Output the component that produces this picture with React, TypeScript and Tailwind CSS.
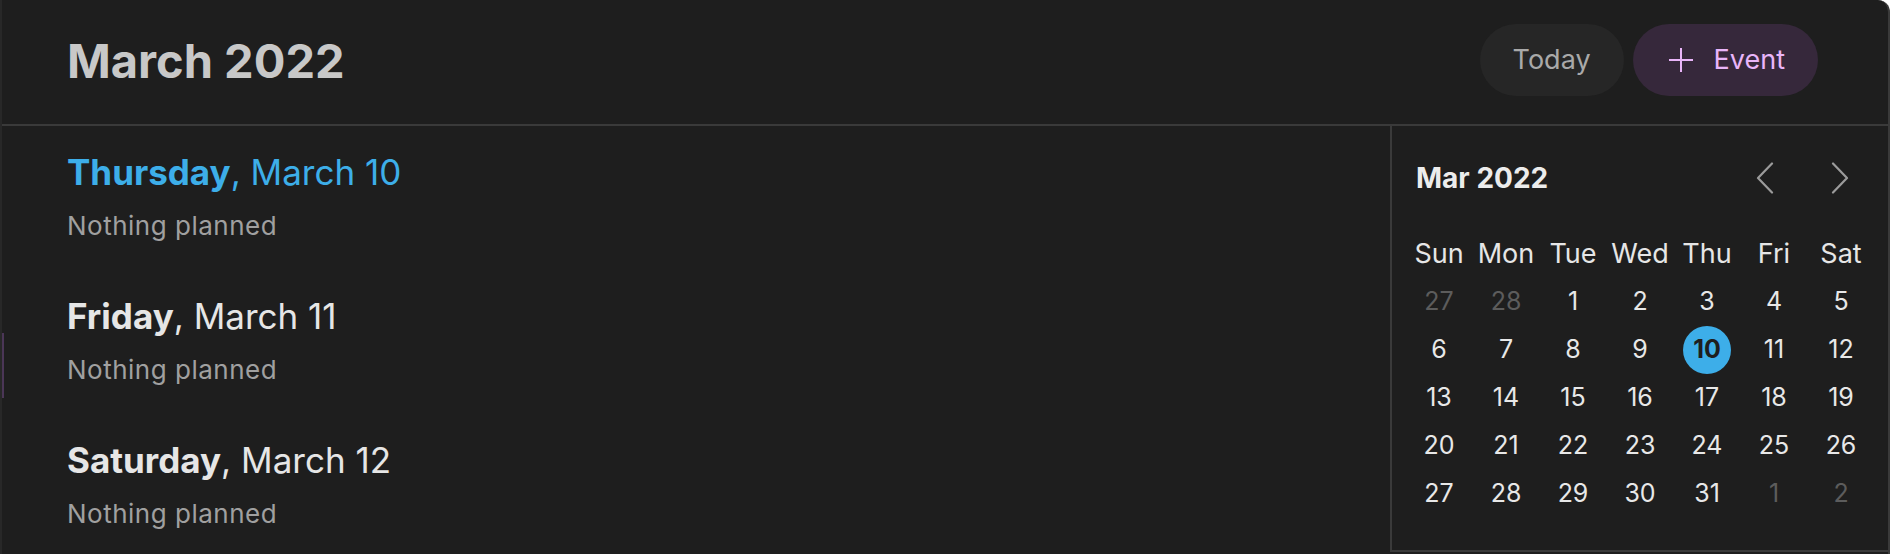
import React from "react";

const days = [
  { name: "Thursday", date: "March 10", today: true },
  { name: "Friday", date: "March 11", today: false },
  { name: "Saturday", date: "March 12", today: false },
];

const weekdays = ["Sun", "Mon", "Tue", "Wed", "Thu", "Fri", "Sat"];

// 5 weeks of March 2022, with the spill-over days from Feb / Apr
const cells: { n: number; muted?: boolean; today?: boolean }[] = [
  { n: 27, muted: true },
  { n: 28, muted: true },
  ...Array.from({ length: 31 }, (_, i) => ({ n: i + 1, today: i + 1 === 10 })),
  { n: 1, muted: true },
  { n: 2, muted: true },
];

function Chevron({ dir }: { dir: "left" | "right" }) {
  return (
    <svg width="18" height="32" viewBox="0 0 18 32" fill="none" stroke="#9b9b9b" strokeWidth="2.2" strokeLinecap="round" strokeLinejoin="round">
      {dir === "left" ? <polyline points="16,1.5 2,16 16,30.5" /> : <polyline points="2,1.5 16,16 2,30.5" />}
    </svg>
  );
}

export default function App() {
  return (
    <div
      className="relative w-[1890px] h-[554px] bg-[#1e1e1e] flex flex-col border-l-2 border-l-[#282828] border-r-2 border-r-[#3a3a3a] rounded-tr-[12px] overflow-hidden"
      style={{ fontFamily: "Inter, 'Noto Sans', sans-serif" }}
    >
      <div className="absolute left-0 top-[333px] w-[2px] h-[65px] bg-[#4b3657]" />

      <header className="h-[126px] shrink-0 flex items-center justify-between pl-[65px] pr-[70px] pb-[4px] border-b-2 border-[#3a3a3a]">
        <h1 className="text-[47px] font-bold text-[#c8c8c8] leading-none">March 2022</h1>
        <div className="flex items-center gap-[9px]">
          <button className="h-[72px] px-[33px] rounded-full bg-[#262626] text-[27px] text-[#a9a9a9]">Today</button>
          <button className="h-[72px] pl-[36px] pr-[33px] rounded-full bg-[#36283b] text-[27px] text-[#e9b5f9] flex items-center gap-[21px]">
            <svg width="24" height="24" viewBox="0 0 24 24" fill="none" stroke="#e9b5f9" strokeWidth="2">
              <line x1="12" y1="0" x2="12" y2="24" />
              <line x1="0" y1="12" x2="24" y2="12" />
            </svg>
            Event
          </button>
        </div>
      </header>

      <div className="flex flex-1">
        <div className="flex-1 pl-[65px] pt-[24px] flex flex-col gap-[52px]">
          {days.map((d) => (
            <div key={d.date} className="flex flex-col">
              <p className={"text-[35px] leading-[44px] " + (d.today ? "text-[#3daee9]" : "text-[#e6e6e6]")}>
                <span className="font-bold">{d.name}</span>, {d.date}
              </p>
              <p className="mt-[16px] text-[26px] leading-[32px] tracking-[0.5px] text-[#a0a0a0]">Nothing planned</p>
            </div>
          ))}
        </div>

        <aside className="w-[498px] h-[426px] shrink-0 border-l-2 border-b-2 border-[#3a3a3a] flex flex-col">
          <div className="mt-[30px] h-[44px] flex items-center justify-between pl-[24px] pr-[24px]">
            <span className="text-[28px] font-bold text-[#ececec]">Mar 2022</span>
            <div className="flex items-center gap-[27px]">
              <span className="w-[48px] h-[44px] flex items-center justify-center">
                <Chevron dir="left" />
              </span>
              <span className="w-[48px] h-[44px] flex items-center justify-center">
                <Chevron dir="right" />
              </span>
            </div>
          </div>

          <div className="mt-[30px] w-[469px] mx-auto grid grid-cols-7">
            {weekdays.map((w) => (
              <div key={w} className="h-[48px] flex items-center justify-center text-[27px] text-[#e6e6e6]">
                {w}
              </div>
            ))}
            {cells.map((c, i) => (
              <div key={i} className="h-[48px] flex items-center justify-center">
                {c.today ? (
                  <span className="w-[48px] h-[48px] rounded-full bg-[#3daee9] flex items-center justify-center text-[25px] font-bold text-[#1e1e1e]">
                    {c.n}
                  </span>
                ) : (
                  <span className={"text-[25px] " + (c.muted ? "text-[#5c5c5c]" : "text-[#e8e8e8]")}>{c.n}</span>
                )}
              </div>
            ))}
          </div>
        </aside>
      </div>
    </div>
  );
}
